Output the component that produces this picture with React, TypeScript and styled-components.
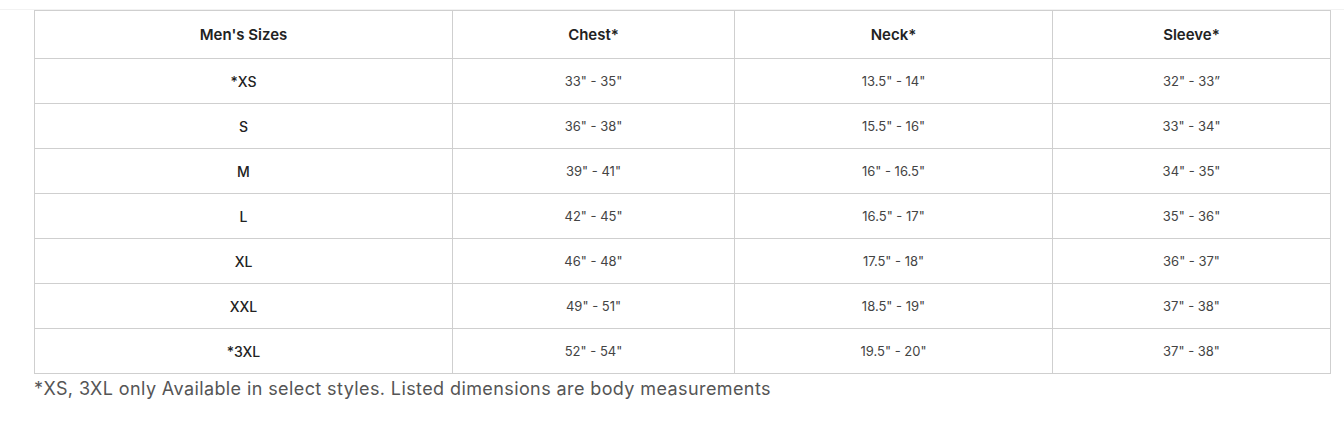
import React from "react";
import styled, { createGlobalStyle } from "styled-components";

const Global = createGlobalStyle`
  html, body { margin: 0; padding: 0; background: #fff; }
  body { font-family: "Inter", "Liberation Sans", Arial, sans-serif; }
`;

const Page = styled.div`
  width: 1344px;
  height: 440px;
  overflow: hidden;
  border-top: 1px solid #f2f2f2;
  margin-top: 9px;
  box-sizing: border-box;
`;

const Content = styled.div`
  padding-left: 34px;
  width: 1297px;
`;

const Table = styled.table`
  border-collapse: collapse;
  width: 1297px;
  table-layout: fixed;
`;

const Col = styled.col<{ $w?: number }>`
  width: ${(p) => (p.$w ? `${p.$w}px` : "auto")};
`;

const HeadCell = styled.th`
  height: 47px;
  border: 1px solid #cfcfcf;
  padding: 0;
  text-align: center;
  font-size: 15px;
  font-weight: 600;
  color: #222;
`;

const Cell = styled.td<{ $strong?: boolean }>`
  height: 44px;
  border: 1px solid #cfcfcf;
  padding: 0;
  text-align: center;
  font-size: ${(p) => (p.$strong ? "14px" : "13px")};
  font-weight: ${(p) => (p.$strong ? 500 : 400)};
  color: ${(p) => (p.$strong ? "#222" : "#444")};
`;

const Note = styled.p`
  margin: 4px 0 0;
  font-size: 18px;
  color: #555;
  letter-spacing: 0.4px;
`;

const cols = [
  { label: "Men's Sizes", w: 418 },
  { label: "Chest*", w: 282 },
  { label: "Neck*", w: 318 },
  { label: "Sleeve*", w: 0 },
];

const rows = [
  ["*XS", '33" - 35"', '13.5" - 14"', '32" - 33”'],
  ["S", '36" - 38"', '15.5" - 16"', '33" - 34"'],
  ["M", '39" - 41"', '16" - 16.5"', '34" - 35"'],
  ["L", '42" - 45"', '16.5" - 17"', '35" - 36"'],
  ["XL", '46" - 48"', '17.5" - 18"', '36" - 37"'],
  ["XXL", '49" - 51"', '18.5" - 19"', '37" - 38"'],
  ["*3XL", '52" - 54"', '19.5" - 20"', '37" - 38"'],
];

export default function App() {
  return (
    <>
      <Global />
      <Page>
        <Content>
          <Table>
            <colgroup>
              {cols.map((c) => (
                <Col key={c.label} $w={c.w || undefined} />
              ))}
            </colgroup>
            <thead>
              <tr>
                {cols.map((c) => (
                  <HeadCell key={c.label}>{c.label}</HeadCell>
                ))}
              </tr>
            </thead>
            <tbody>
              {rows.map((r) => (
                <tr key={r[0]}>
                  {r.map((v, i) => (
                    <Cell key={i} $strong={i === 0}>
                      {v}
                    </Cell>
                  ))}
                </tr>
              ))}
            </tbody>
          </Table>
          <Note>
            *XS, 3XL only Available in select styles. Listed dimensions are body measurements
          </Note>
        </Content>
      </Page>
    </>
  );
}
